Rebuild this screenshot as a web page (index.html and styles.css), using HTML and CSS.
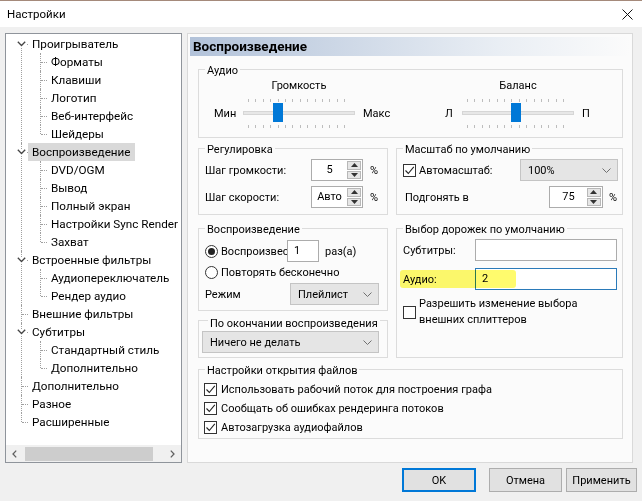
FILE: index.html
```html
<!DOCTYPE html>
<html lang="ru">
<head>
  <meta charset="UTF-8">
  <title>Настройки</title>
  <link rel="stylesheet" href="styles.css">
</head>
<body>
<div class="window">

  <!-- Title bar -->
  <div class="titlebar">
    <span class="title">Настройки</span>
    <svg class="close" width="11" height="11" viewBox="0 0 11 11"><path d="M0.5 0.5 L10.5 10.5 M10.5 0.5 L0.5 10.5" stroke="#111" stroke-width="1" fill="none"/></svg>
  </div>

  <div class="main">

    <!-- Tree of pages -->
    <div class="tree">
      <ul class="tree-list">
        <li class="open">
          <svg class="twisty" width="9" height="6" viewBox="0 0 9 6"><path d="M0.8 0.8 L4.5 4.5 L8.2 0.8" stroke="#444" stroke-width="1.3" fill="none"/></svg>
          <div class="row"><span class="label">Проигрыватель</span></div>
          <ul>
            <li><div class="row"><span class="label">Форматы</span></div></li>
            <li><div class="row"><span class="label">Клавиши</span></div></li>
            <li><div class="row"><span class="label">Логотип</span></div></li>
            <li><div class="row"><span class="label">Веб-интерфейс</span></div></li>
            <li><div class="row"><span class="label">Шейдеры</span></div></li>
          </ul>
        </li>
        <li class="open">
          <svg class="twisty" width="9" height="6" viewBox="0 0 9 6"><path d="M0.8 0.8 L4.5 4.5 L8.2 0.8" stroke="#444" stroke-width="1.3" fill="none"/></svg>
          <div class="row"><span class="label selected">Воспроизведение</span></div>
          <ul>
            <li><div class="row"><span class="label">DVD/OGM</span></div></li>
            <li><div class="row"><span class="label">Вывод</span></div></li>
            <li><div class="row"><span class="label">Полный экран</span></div></li>
            <li><div class="row"><span class="label">Настройки Sync Render</span></div></li>
            <li><div class="row"><span class="label">Захват</span></div></li>
          </ul>
        </li>
        <li class="open">
          <svg class="twisty" width="9" height="6" viewBox="0 0 9 6"><path d="M0.8 0.8 L4.5 4.5 L8.2 0.8" stroke="#444" stroke-width="1.3" fill="none"/></svg>
          <div class="row"><span class="label">Встроенные фильтры</span></div>
          <ul>
            <li><div class="row"><span class="label">Аудиопереключатель</span></div></li>
            <li><div class="row"><span class="label">Рендер аудио</span></div></li>
          </ul>
        </li>
        <li><div class="row"><span class="label">Внешние фильтры</span></div></li>
        <li class="open">
          <svg class="twisty" width="9" height="6" viewBox="0 0 9 6"><path d="M0.8 0.8 L4.5 4.5 L8.2 0.8" stroke="#444" stroke-width="1.3" fill="none"/></svg>
          <div class="row"><span class="label">Субтитры</span></div>
          <ul>
            <li><div class="row"><span class="label">Стандартный стиль</span></div></li>
            <li><div class="row"><span class="label">Дополнительно</span></div></li>
          </ul>
        </li>
        <li><div class="row"><span class="label">Дополнительно</span></div></li>
        <li><div class="row"><span class="label">Разное</span></div></li>
        <li><div class="row"><span class="label">Расширенные</span></div></li>
      </ul>

      <div class="hscroll">
        <div class="scroll-arrow"><svg width="5" height="8" viewBox="0 0 5 8"><path d="M4.2 0.6 L1 4 L4.2 7.4" stroke="#606060" stroke-width="1.3" fill="none"/></svg></div>
        <div class="scroll-thumb"></div>
        <div class="scroll-arrow right"><svg width="5" height="8" viewBox="0 0 5 8"><path d="M0.8 0.6 L4 4 L0.8 7.4" stroke="#606060" stroke-width="1.3" fill="none"/></svg></div>
      </div>
    </div>

    <!-- Settings page -->
    <div class="page">
      <div class="page-header">Воспроизведение</div>

      <!-- Audio -->
      <div class="group audio">
        <div class="group-title">Аудио</div>
        <div class="audio-body">
          <div class="slider-col volume">
            <div class="slider-title">Громкость</div>
            <span class="slider-min">Мин</span>
            <div class="slider">
              <div class="ticks"></div>
              <div class="track"></div>
              <div class="ticks bottom"></div>
              <div class="thumb volume-thumb"></div>
            </div>
            <span class="slider-max">Макс</span>
          </div>
          <div class="slider-col balance">
            <div class="slider-title">Баланс</div>
            <span class="slider-min">Л</span>
            <div class="slider">
              <div class="ticks"></div>
              <div class="track"></div>
              <div class="ticks bottom"></div>
              <div class="thumb balance-thumb"></div>
            </div>
            <span class="slider-max">П</span>
          </div>
        </div>
      </div>

      <div class="columns">

        <!-- Регулировка -->
        <div class="group reg">
          <div class="group-title">Регулировка</div>
          <div class="field-row first">
            <span class="field-label">Шаг громкости:</span>
            <div class="spin">
              <span class="spin-value">5</span>
              <div class="spin-btns">
                <span class="spin-btn"><svg width="7" height="4" viewBox="0 0 7 4"><path d="M0 4 L3.5 0 L7 4 Z" fill="#333"/></svg></span>
                <span class="spin-btn"><svg width="7" height="4" viewBox="0 0 7 4"><path d="M0 0 L3.5 4 L7 0 Z" fill="#333"/></svg></span>
              </div>
            </div>
            <span class="unit">%</span>
          </div>
          <div class="field-row">
            <span class="field-label">Шаг скорости:</span>
            <div class="spin">
              <span class="spin-value">Авто</span>
              <div class="spin-btns">
                <span class="spin-btn"><svg width="7" height="4" viewBox="0 0 7 4"><path d="M0 4 L3.5 0 L7 4 Z" fill="#333"/></svg></span>
                <span class="spin-btn"><svg width="7" height="4" viewBox="0 0 7 4"><path d="M0 0 L3.5 4 L7 0 Z" fill="#333"/></svg></span>
              </div>
            </div>
            <span class="unit">%</span>
          </div>
        </div>

        <!-- Масштаб -->
        <div class="group zoom">
          <div class="group-title">Масштаб по умолчанию</div>
          <div class="field-row first">
            <span class="checkbox checked"><svg width="11" height="11" viewBox="0 0 11 11"><path d="M1.5 5.5 L4.3 8.5 L9.8 1.8" stroke="#222" stroke-width="1.1" fill="none"/></svg></span>
            <span class="check-label">Автомасштаб:</span>
            <div class="combo zoom-combo">
              <span>100%</span>
              <svg width="9" height="5" viewBox="0 0 9 5"><path d="M0.5 0.5 L4.5 4.5 L8.5 0.5" stroke="#707070" stroke-width="1" fill="none"/></svg>
            </div>
          </div>
          <div class="field-row fit">
            <span>Подгонять в</span>
            <div class="spin fit-spin">
              <span class="spin-value">75</span>
              <div class="spin-btns">
                <span class="spin-btn"><svg width="7" height="4" viewBox="0 0 7 4"><path d="M0 4 L3.5 0 L7 4 Z" fill="#333"/></svg></span>
                <span class="spin-btn"><svg width="7" height="4" viewBox="0 0 7 4"><path d="M0 0 L3.5 4 L7 0 Z" fill="#333"/></svg></span>
              </div>
            </div>
            <span class="unit">%</span>
          </div>
        </div>

        <div class="stack">
          <!-- Воспроизведение -->
          <div class="group play">
            <div class="group-title">Воспроизведение</div>
            <div class="field-row first">
              <span class="radio checked"></span>
              <span class="radio-label times-text">Воспроизвест</span>
              <div class="edit times">1</div>
              <span class="times-label">раз(а)</span>
            </div>
            <div class="field-row short">
              <span class="radio"></span>
              <span class="radio-label">Повторять бесконечно</span>
            </div>
            <div class="field-row mode">
              <span>Режим</span>
              <div class="combo mode-combo">
                <span>Плейлист</span>
                <svg width="9" height="5" viewBox="0 0 9 5"><path d="M0.5 0.5 L4.5 4.5 L8.5 0.5" stroke="#707070" stroke-width="1" fill="none"/></svg>
              </div>
            </div>
          </div>

          <!-- По окончании -->
          <div class="group after">
            <div class="group-title">По окончании воспроизведения</div>
            <div class="combo after-combo">
              <span>Ничего не делать</span>
              <svg width="9" height="5" viewBox="0 0 9 5"><path d="M0.5 0.5 L4.5 4.5 L8.5 0.5" stroke="#707070" stroke-width="1" fill="none"/></svg>
            </div>
          </div>
        </div>

        <!-- Выбор дорожек -->
        <div class="group tracks">
          <div class="group-title">Выбор дорожек по умолчанию</div>
          <div class="field-row first">
            <span>Субтитры:</span>
            <div class="edit track-edit"></div>
          </div>
          <div class="field-row audio-row">
            <span>Аудио:</span>
            <div class="edit track-edit focused">2</div>
            <div class="highlight"></div>
          </div>
          <div class="field-row splitters">
            <span class="checkbox"></span>
            <span class="check-label">Разрешить изменение выбора<br>внешних сплиттеров</span>
          </div>
        </div>

      </div>

      <!-- Настройки открытия файлов -->
      <div class="group files">
        <div class="group-title">Настройки открытия файлов</div>
        <div class="check-row first">
          <span class="checkbox checked"><svg width="11" height="11" viewBox="0 0 11 11"><path d="M1.5 5.5 L4.3 8.5 L9.8 1.8" stroke="#222" stroke-width="1.1" fill="none"/></svg></span>
          <span class="check-label">Использовать рабочий поток для построения графа</span>
        </div>
        <div class="check-row">
          <span class="checkbox checked"><svg width="11" height="11" viewBox="0 0 11 11"><path d="M1.5 5.5 L4.3 8.5 L9.8 1.8" stroke="#222" stroke-width="1.1" fill="none"/></svg></span>
          <span class="check-label">Сообщать об ошибках рендеринга потоков</span>
        </div>
        <div class="check-row">
          <span class="checkbox checked"><svg width="11" height="11" viewBox="0 0 11 11"><path d="M1.5 5.5 L4.3 8.5 L9.8 1.8" stroke="#222" stroke-width="1.1" fill="none"/></svg></span>
          <span class="check-label">Автозагрузка аудиофайлов</span>
        </div>
      </div>
    </div>
  </div>

  <!-- Dialog buttons -->
  <div class="buttons">
    <button class="btn btn-ok">OK</button>
    <button class="btn btn-cancel">Отмена</button>
    <button class="btn btn-apply">Применить</button>
  </div>

</div>
</body>
</html>
```

FILE: styles.css
```css
/* Reset */
* {
  margin: 0;
  padding: 0;
  box-sizing: border-box;
}

body {
  font-family: Roboto, "Noto Sans", "Liberation Sans", sans-serif;
  font-size: 12px;
  color: #000;
  background: #f0f0f0;
}

.window {
  width: 642px;
  height: 501px;
  background: #f0f0f0;
  border-top: 1px solid #a58a7b;
  overflow: hidden;
}

/* Title bar */
.titlebar {
  height: 26px;
  background: #fff;
  display: flex;
  align-items: center;
  justify-content: space-between;
  padding: 0 9px 0 7px;
  font-size: 11.5px;
}

.main {
  display: flex;
  gap: 5px;
  padding: 6px 0 0 5px;
}

/* Tree */
.tree {
  width: 177px;
  height: 430px;
  border: 1px solid #8f949b;
  background: #fff;
  display: flex;
  flex-direction: column;
  font-size: 11.7px;
}

.tree-list {
  flex: 1;
  padding-top: 1px;
  list-style: none;
  overflow: hidden;
}

.tree-list ul {
  list-style: none;
}

.tree-list li {
  position: relative;
  padding-left: 22px;
}

.tree-list .row {
  height: 18px;
  line-height: 18px;
  white-space: nowrap;
}

.tree-list .label {
  display: inline-block;
  padding: 0 4px;
}

.tree-list .label.selected {
  background: #d9d9d9;
}

/* dotted connector lines */
.tree-list li::before {
  content: '';
  position: absolute;
  left: 15px;
  top: 0;
  bottom: 0;
  border-left: 1px dotted #a0a0a0;
}

.tree-list li::after {
  content: '';
  position: absolute;
  left: 16px;
  top: 9px;
  width: 6px;
  border-top: 1px dotted #a0a0a0;
}

.tree-list > li:first-child::before {
  top: 9px;
}

.tree-list li:last-child::before {
  bottom: auto;
  height: 9px;
}

.tree-list ul li {
  padding-left: 19px;
}

.tree-list ul li::before {
  left: 12px;
}

.tree-list ul li::after {
  left: 13px;
}

.twisty {
  position: absolute;
  left: 11px;
  top: 6px;
  z-index: 1;
  background: #fff;
}

/* Horizontal scroll bar */
.hscroll {
  height: 17px;
  display: flex;
  align-items: center;
  background: #f0f0f0;
}

.scroll-arrow {
  width: 17px;
  height: 17px;
  display: flex;
  align-items: center;
  justify-content: center;
}

.scroll-arrow.right {
  margin-left: auto;
}

.scroll-thumb {
  width: 128px;
  height: 14px;
  margin-left: 2px;
  background: #cdcdcd;
}

/* Settings page */
.page {
  width: 446px;
  height: 430px;
  border: 1px solid #d9d9d9;
  background: #fbfbfb;
  padding-top: 3px;
  font-size: 11px;
}

.page-header {
  margin: 0 2px;
  height: 19px;
  line-height: 19px;
  padding-left: 3px;
  font-size: 13.5px;
  font-weight: bold;
  background: linear-gradient(90deg, #b2c2d9, #e9eef4 70%, #fbfbfb);
}

/* Group boxes */
.group {
  border: 1px solid #dcdcdc;
}

.group-title {
  display: table;
  margin: -6px 0 0 6px;
  padding: 0 2px;
  line-height: 14px;
  background: #fbfbfb;
  white-space: nowrap;
}

.audio {
  margin: 13px 9px 0 10px;
}

.audio-body {
  display: grid;
  grid-template-columns: 231px auto;
  padding: 1px 0 9px 15px;
}

.slider-col {
  display: grid;
  grid-template-columns: 29px 112px auto;
  grid-template-rows: 14px 30px;
  row-gap: 5px;
  align-items: center;
}

.slider-col.balance {
  grid-template-columns: 17px 112px auto;
}

.slider-title {
  grid-column: 2;
  text-align: center;
  line-height: 14px;
}

.slider-min {
  grid-column: 1;
  grid-row: 2;
}

.slider-max {
  grid-row: 2;
  margin-left: 8px;
}

.slider {
  grid-row: 2;
  position: relative;
  height: 30px;
}

.ticks {
  height: 3px;
  margin: 1px 5px 0;
  background: repeating-linear-gradient(90deg, #bdbdbd 0 1px, transparent 1px 7.4px);
}

.ticks.bottom {
  margin-top: 10px;
}

.track {
  height: 4px;
  margin-top: 9px;
  background: #e7e7e7;
  border: 1px solid #d6d6d6;
}

.thumb {
  position: absolute;
  top: 5px;
  width: 10px;
  height: 19px;
  background: #0078d7;
}

.volume-thumb {
  left: 30px;
}

.balance-thumb {
  left: 49px;
}

/* Two column area */
.columns {
  display: grid;
  grid-template-columns: 190px 227px;
  column-gap: 8px;
  row-gap: 13px;
  margin: 10px 9px 0 10px;
}

.stack {
  display: flex;
  flex-direction: column;
  gap: 9px;
}

.field-row {
  display: flex;
  align-items: center;
  height: 22px;
  margin-top: 5px;
}

.reg .field-row {
  padding-left: 6px;
}

.reg .field-row.first,
.zoom .field-row.first {
  margin-top: 2px;
}

.reg {
  padding-bottom: 6px;
}

.field-label {
  width: 106px;
}

.unit {
  margin-left: 7px;
}

/* Spin boxes */
.spin {
  display: flex;
  width: 52px;
  height: 22px;
  border: 1px solid #acacac;
  background: #fff;
}

.spin-value {
  flex: 1;
  text-align: center;
  line-height: 20px;
}

.spin-btns {
  width: 15px;
  display: flex;
  flex-direction: column;
  gap: 1px;
  padding: 1px 1px 1px 0;
}

.spin-btn {
  flex: 1;
  display: flex;
  align-items: center;
  justify-content: center;
  background: #e6e6e6;
  border: 1px solid #b8b8b8;
}

/* Check boxes, radios */
.checkbox {
  width: 13px;
  height: 13px;
  flex: none;
  border: 1px solid #333;
  background: #fff;
  display: flex;
  align-items: center;
  justify-content: center;
}

.check-label {
  margin-left: 3px;
}

.radio {
  width: 13px;
  height: 13px;
  flex: none;
  border: 1px solid #333;
  border-radius: 50%;
  background: #fff;
  display: flex;
  align-items: center;
  justify-content: center;
}

.radio.checked::after {
  content: '';
  width: 7px;
  height: 7px;
  border-radius: 50%;
  background: #222;
}

.radio-label {
  margin-left: 3px;
  white-space: nowrap;
}

.radio-label.times-text {
  width: 66px;
}

/* Combo boxes and edits */
.combo {
  height: 22px;
  display: flex;
  align-items: center;
  justify-content: space-between;
  padding: 0 6px 0 7px;
  background: #e5e5e5;
  border: 1px solid #c4c4c4;
}

.edit {
  height: 22px;
  line-height: 20px;
  padding-left: 6px;
  border: 1px solid #acacac;
  background: #fff;
}

/* Масштаб */
.zoom .field-row {
  padding-left: 6px;
  padding-right: 4px;
}

.zoom-combo {
  width: 98px;
  margin-left: auto;
}

.zoom .field-row.fit {
  padding-left: 8px;
  padding-right: 5px;
}

.fit-spin {
  width: 54px;
  margin-left: auto;
}

.fit .unit {
  margin-left: 6px;
}

/* Воспроизведение */
.play {
  padding-bottom: 5px;
}

.play .field-row {
  padding-left: 6px;
  padding-right: 8px;
}

.play .field-row.first {
  margin-top: 3px;
}

.play .field-row.short {
  height: 14px;
  margin-top: 3px;
}

.play .field-row.mode {
  margin-top: 4px;
}

.times {
  width: 32px;
}

.times-label {
  margin-left: 6px;
}

.mode-combo {
  width: 89px;
  margin-left: auto;
}

.after {
  padding: 2px 8px 4px 3px;
}

/* Выбор дорожек */
.tracks .field-row {
  position: relative;
  padding: 0 5px 0 6px;
}

.tracks .field-row.first {
  margin-top: 2px;
}

.tracks .audio-row {
  margin-top: 7px;
}

.track-edit {
  width: 142px;
  margin-left: auto;
}

.track-edit.focused {
  border-color: #2a7ab9;
}

.highlight {
  position: absolute;
  left: 3px;
  top: 2px;
  width: 116px;
  height: 18px;
  background: rgba(255, 250, 60, 0.75);
  mix-blend-mode: multiply;
  border-radius: 3px;
}

.tracks .splitters {
  height: 32px;
  margin-top: 6px;
  line-height: 16px;
}

/* Files */
.files {
  margin: 11px 9px 0 10px;
  padding-bottom: 1px;
}

.check-row {
  display: flex;
  align-items: center;
  height: 19px;
  padding-left: 5px;
}

.check-row.first {
  margin-top: 2px;
}

.check-row .check-label {
  margin-left: 4px;
}

/* Dialog buttons */
.buttons {
  display: flex;
  justify-content: flex-end;
  padding: 5px 5px 0 0;
}

.btn {
  height: 24px;
  font-family: inherit;
  font-size: 11px;
  color: #000;
  background: #e1e1e1;
  border: 1px solid #adadad;
}

.btn-ok {
  width: 74px;
  border: 2px solid #0078d7;
}

.btn-cancel {
  width: 73px;
  margin-left: 13px;
}

.btn-apply {
  width: 71px;
  margin-left: 4px;
}
```
